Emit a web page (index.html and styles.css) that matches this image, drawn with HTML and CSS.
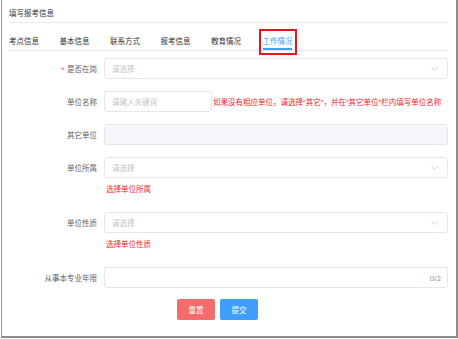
FILE: index.html
```html
<!DOCTYPE html>
<html lang="zh">
<head>
<meta charset="utf-8">
<title>填写报考信息</title>
<link rel="stylesheet" href="styles.css">
</head>
<body>
<div class="frame">
  <div class="title">填写报考信息</div>
  <div class="tabs">
    <div class="tab">考点信息</div>
    <div class="tab">基本信息</div>
    <div class="tab">联系方式</div>
    <div class="tab">报考信息</div>
    <div class="tab">教育情况</div>
    <div class="tab active">工作情况<span class="mark"></span></div>
  </div>
  <div class="form">
    <div class="row">
      <div class="label"><span class="req">*</span>是否在岗</div>
      <div class="field">
        <div class="input select"><span class="ph">请选择</span><svg class="chev" width="7" height="4" viewBox="0 0 7 4"><path d="M0.5 0.5 L3.5 3.3 L6.5 0.5" fill="none" stroke="#c0c4cc" stroke-width="0.8"/></svg></div>
      </div>
    </div>
    <div class="row">
      <div class="label">单位名称</div>
      <div class="field inline">
        <div class="input short"><span class="ph">请输入关键词</span></div>
        <span class="hint">如果没有相应单位，请选择“其它”，并在“其它单位”栏内填写单位名称</span>
      </div>
    </div>
    <div class="row">
      <div class="label">其它单位</div>
      <div class="field">
        <div class="input disabled"></div>
      </div>
    </div>
    <div class="row">
      <div class="label">单位所属</div>
      <div class="field">
        <div class="input select"><span class="ph">请选择</span><svg class="chev" width="7" height="4" viewBox="0 0 7 4"><path d="M0.5 0.5 L3.5 3.3 L6.5 0.5" fill="none" stroke="#c0c4cc" stroke-width="0.8"/></svg></div>
      </div>
    </div>
    <div class="error">选择单位所属</div>
    <div class="row">
      <div class="label">单位性质</div>
      <div class="field">
        <div class="input select"><span class="ph">请选择</span><svg class="chev" width="7" height="4" viewBox="0 0 7 4"><path d="M0.5 0.5 L3.5 3.3 L6.5 0.5" fill="none" stroke="#c0c4cc" stroke-width="0.8"/></svg></div>
      </div>
    </div>
    <div class="error">选择单位性质</div>
    <div class="row">
      <div class="label">从事本专业年限</div>
      <div class="field">
        <div class="input"><span class="count">0/2</span></div>
      </div>
    </div>
    <div class="buttons">
      <button class="btn reset">重置</button>
      <button class="btn submit">提交</button>
    </div>
  </div>
</div>
</body>
</html>
```
FILE: styles.css
```css
html, body {
  margin: 0;
  padding: 0;
  background: #ffffff;
}
body {
  padding-left: 1px;
  font-family: "Noto Sans", "Noto Sans CJK SC", sans-serif;
  font-size: 7.5px;
}
.frame {
  box-sizing: border-box;
  width: 457px;
  height: 338px;
  border-left: 1px solid #9a9a9a;
  border-right: 2px solid #8c8c8c;
  border-bottom: 2px solid #8c8c8c;
  padding: 0 8px 0 7px;
}
.title {
  padding-top: 8px;
  height: 14px;
  line-height: 10px;
  color: #303133;
  border-bottom: 1px solid #e8eaef;
}
.tabs {
  display: flex;
  gap: 21.5px;
  height: 27px;
  border-bottom: 1px solid #e4e7ed;
}
.tab {
  position: relative;
  width: 29px;
  white-space: nowrap;
  padding-top: 13px;
  line-height: 10px;
  color: #303133;
}
.tab.active {
  color: #409eff;
  box-shadow: inset 0 -2px 0 #409eff;
  margin-left: 1px;
}
.mark {
  position: absolute;
  left: -4px;
  right: -5px;
  top: 6px;
  bottom: -5px;
  border: 2px solid #e8141a;
}
.form {
  padding-top: 7px;
}
.row {
  display: flex;
  align-items: center;
  gap: 7px;
  margin-bottom: 12px;
}
.label {
  flex: 0 0 88px;
  text-align: right;
  color: #606266;
  line-height: 10px;
  white-space: nowrap;
}
.req {
  color: #f56c6c;
  margin-right: 2px;
}
.field {
  flex: 1;
  min-width: 0;
  display: flex;
  align-items: center;
}
.input {
  box-sizing: border-box;
  flex: 1;
  height: 21px;
  border: 1px solid #e4e7ed;
  border-radius: 3px;
  padding: 0 7px;
  display: flex;
  align-items: center;
  justify-content: space-between;
  background: #ffffff;
}
.input.short {
  flex: 0 0 108px;
}
.input.disabled {
  background: #f5f7fa;
}
.ph {
  color: #c0c4cc;
}
.chev {
  margin-right: 2px;
}
.count {
  margin-left: auto;
  color: #909399;
  margin-right: -1px;
}
.hint {
  margin-left: 1px;
  color: #f5222d;
  white-space: nowrap;
}
.error {
  margin: -6px 0 18px 97px;
  line-height: 10px;
  color: #f5222d;
}
.buttons {
  display: flex;
  gap: 5px;
  margin-top: -1px;
  padding-left: 168px;
}
.btn {
  width: 38px;
  height: 21px;
  border: none;
  border-radius: 2px;
  color: #ffffff;
  font-family: "Noto Sans", "Noto Sans CJK SC", sans-serif;
  font-size: 7.5px;
  padding: 0;
}
.reset {
  background: #f56c6c;
}
.submit {
  background: #409eff;
}
```
